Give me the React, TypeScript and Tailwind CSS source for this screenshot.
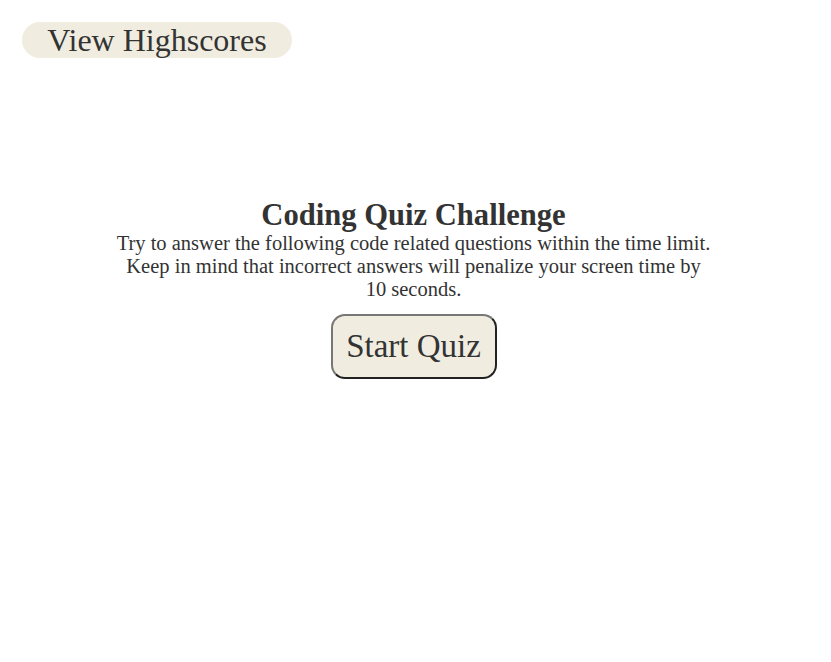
export default function App() {
  return (
    <div className="min-h-[662px] w-full bg-white text-[#333333]" style={{ fontFamily: '"Liberation Serif", serif' }}>
      <header className="pl-[22px] pt-[22px]">
        <button className="h-[36px] w-[270px] rounded-full bg-[#f0ede0] text-[32px] leading-none text-[#333333]">
          View Highscores
        </button>
      </header>
      <main className="mt-[139px] flex flex-col items-center pr-[4px]">
        <h1 className="text-[30.6px] font-bold leading-[36px]">Coding Quiz Challenge</h1>
        <p className="mt-[-1px] w-[597px] text-center text-[20.5px] leading-[23px]">
          Try to answer the following code related questions within the time limit. Keep in mind that incorrect answers will penalize your screen time by 10 seconds.
        </p>
        <button className="mt-[13px] h-[65px] w-[166px] rounded-[14px] border-2 border-t-[#777777] border-l-[#777777] border-r-[#222222] border-b-[#222222] bg-[#f0ede0] text-[33px] leading-none text-[#333333]">
          Start Quiz
        </button>
      </main>
    </div>
  );
}
